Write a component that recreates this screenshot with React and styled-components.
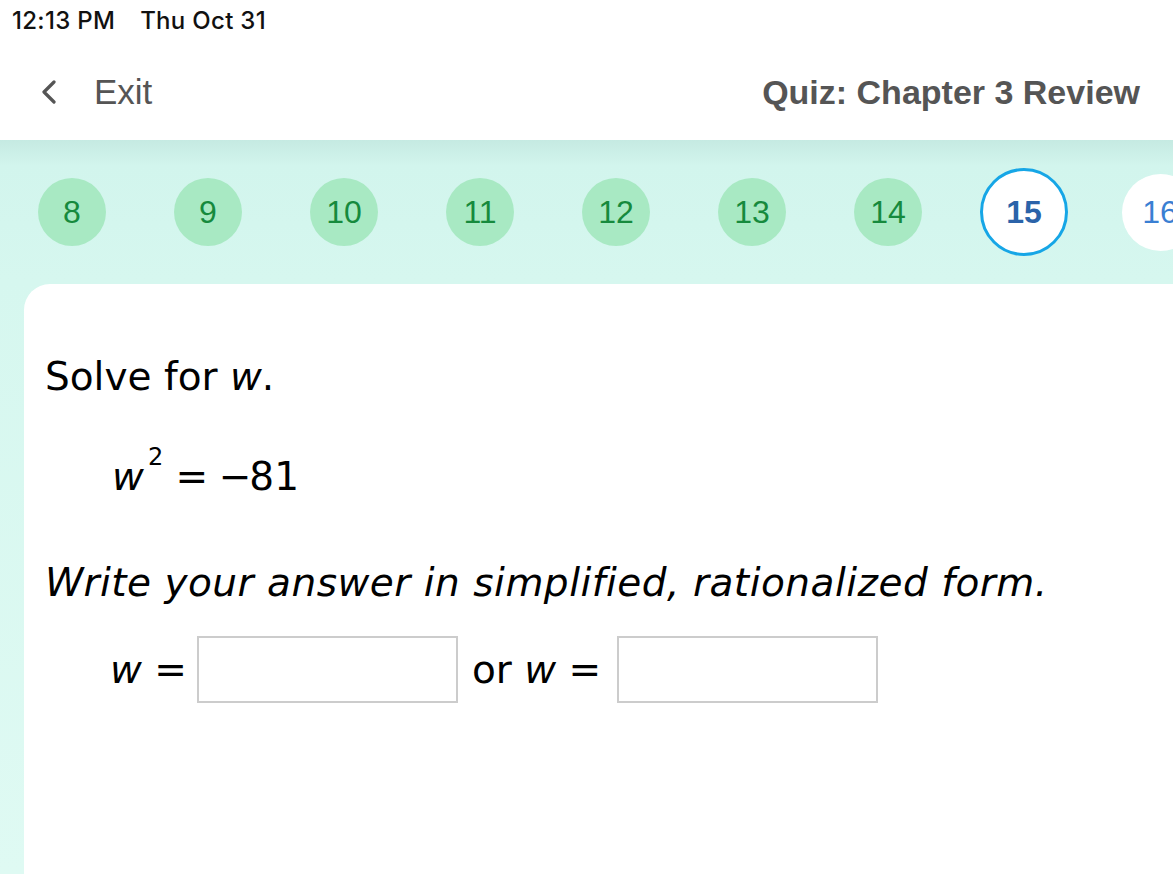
import React from "react";
import styled, { createGlobalStyle } from "styled-components";

const Global = createGlobalStyle`
  html, body { margin: 0; padding: 0; background: #ffffff; }
  body { width: 1173px; height: 874px; overflow: hidden; }
  #root { height: 874px; }
`;

const Page = styled.div`
  width: 1173px;
  height: 874px;
  display: flex;
  flex-direction: column;
  overflow: hidden;
  background: #ffffff;
`;

const StatusBar = styled.div`
  height: 40px;
  display: flex;
  align-items: center;
  gap: 25px;
  padding: 0 0 0 12px;
  font-family: Inter, "Liberation Sans", sans-serif;
  font-size: 24px;
  font-weight: 500;
  letter-spacing: 0.3px;
  color: #111;
`;

const NavBar = styled.div`
  height: 100px;
  display: flex;
  align-items: center;
  justify-content: space-between;
  padding: 4px 33px 0 41px;
  box-sizing: border-box;
  font-family: "Liberation Sans", Arial, sans-serif;
  color: #555555;
`;

const ExitButton = styled.div`
  display: flex;
  align-items: center;
  gap: 37px;
  font-size: 35px;
`;

const Title = styled.div`
  font-size: 34px;
  font-weight: bold;
`;

const Band = styled.div`
  flex: 1;
  display: flex;
  flex-direction: column;
  background: linear-gradient(
    to bottom,
    #c5eae2 0px,
    #d2f5ed 26px,
    #d6f7ef 140px,
    #dffaf3 100%
  );
`;

const BubbleRow = styled.div`
  height: 144px;
  display: flex;
  align-items: center;
  padding-left: 4px;
  overflow: hidden;
  flex-shrink: 0;
`;

const Slot = styled.div`
  flex: 0 0 136px;
  display: flex;
  justify-content: center;
  align-items: center;
`;

const Bubble = styled.div`
  box-sizing: border-box;
  width: ${(p) => (p.$state === "current" ? 88 : p.$state === "next" ? 77 : 68)}px;
  height: ${(p) => (p.$state === "current" ? 88 : p.$state === "next" ? 77 : 68)}px;
  border-radius: 50%;
  display: flex;
  align-items: center;
  justify-content: center;
  font-family: "Liberation Sans", Arial, sans-serif;
  font-size: 32px;
  background: ${(p) => (p.$state === "done" ? "#a8e9c3" : "#ffffff")};
  color: ${(p) =>
    p.$state === "done" ? "#168a3d" : p.$state === "current" ? "#2b63a9" : "#3a7fd3"};
  font-weight: ${(p) => (p.$state === "current" ? "bold" : "normal")};
  border: ${(p) => (p.$state === "current" ? "3px solid #16a6e6" : "none")};
`;

const Card = styled.div`
  flex: 1;
  margin-left: 24px;
  background: #ffffff;
  border-top-left-radius: 26px;
  padding: 69px 0 0 21px;
  font-family: "DejaVu Sans", Verdana, sans-serif;
  font-size: 39px;
  line-height: 47px;
  color: #000;
`;

const Line = styled.div`
  margin: ${(p) => p.$top || 0}px 0 0 ${(p) => p.$indent || 0}px;
  font-style: ${(p) => (p.$italic ? "italic" : "normal")};
  letter-spacing: ${(p) => (p.$italic ? "0.5px" : "normal")};
  white-space: nowrap;
`;

const Var = styled.span`
  font-style: italic;
`;

const Sup = styled.span`
  font-size: 24px;
  position: relative;
  top: -25px;
  margin-left: 4px;
`;

const Minus = styled.span`
  margin-left: -2px;
  letter-spacing: -2px;
`;

const AnswerRow = styled.div`
  display: flex;
  align-items: center;
  margin: 30px 0 0 65px;
  white-space: nowrap;
`;

const Label = styled.span`
  margin-right: ${(p) => p.$gap || 0}px;
`;

const AnswerBox = styled.div`
  box-sizing: border-box;
  width: 261px;
  height: 67px;
  border: 2px solid #cccccc;
  background: #fff;
  margin-right: ${(p) => p.$gap || 0}px;
`;

const Chevron = () => (
  <svg width="16" height="24" viewBox="0 0 16 24" fill="none">
    <path d="M13 2 L3 12 L13 22" stroke="#555" strokeWidth="3.2" strokeLinecap="round" strokeLinejoin="round" />
  </svg>
);

const questions = [
  { n: 8, s: "done" },
  { n: 9, s: "done" },
  { n: 10, s: "done" },
  { n: 11, s: "done" },
  { n: 12, s: "done" },
  { n: 13, s: "done" },
  { n: 14, s: "done" },
  { n: 15, s: "current" },
  { n: 16, s: "next" },
];

export default function App() {
  return (
    <Page>
      <Global />
      <StatusBar>
        <span>12:13 PM</span>
        <span>Thu Oct 31</span>
      </StatusBar>
      <NavBar>
        <ExitButton>
          <Chevron />
          <span>Exit</span>
        </ExitButton>
        <Title>Quiz: Chapter 3 Review</Title>
      </NavBar>
      <Band>
        <BubbleRow>
          {questions.map((q) => (
            <Slot key={q.n}>
              <Bubble $state={q.s}>{q.n}</Bubble>
            </Slot>
          ))}
        </BubbleRow>
        <Card>
          <Line>
            Solve for <Var>w</Var>.
          </Line>
          <Line $top={53} $indent={67}>
            <Var>w</Var>
            <Sup>2</Sup> = <Minus>−</Minus>81
          </Line>
          <Line $top={53} $italic>
            Write your answer in simplified, rationalized form.
          </Line>
          <AnswerRow>
            <Label $gap={10}>
              <Var>w</Var> =
            </Label>
            <AnswerBox $gap={14} />
            <Label $gap={16}>
              or <Var>w</Var> =
            </Label>
            <AnswerBox />
          </AnswerRow>
        </Card>
      </Band>
    </Page>
  );
}
